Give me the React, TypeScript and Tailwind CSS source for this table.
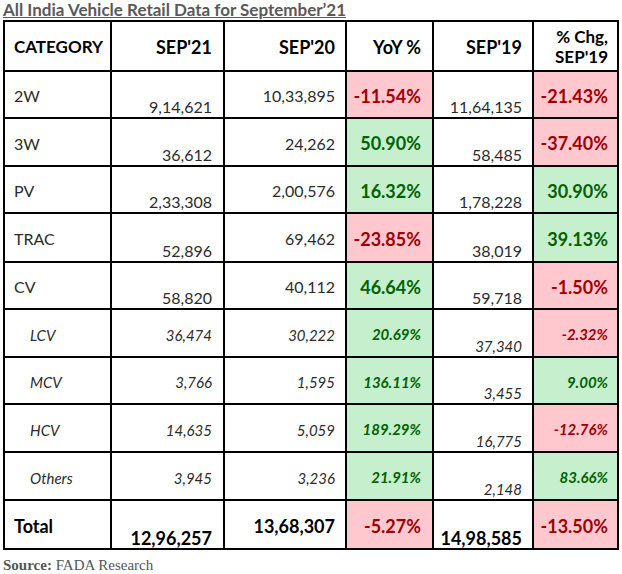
type Row = {
  cat: string;
  s21: string;
  s20: string;
  yoy: string;
  s19: string;
  chg: string;
  sub?: boolean;
};

const rows: Row[] = [
  { cat: "2W", s21: "9,14,621", s20: "10,33,895", yoy: "-11.54%", s19: "11,64,135", chg: "-21.43%" },
  { cat: "3W", s21: "36,612", s20: "24,262", yoy: "50.90%", s19: "58,485", chg: "-37.40%" },
  { cat: "PV", s21: "2,33,308", s20: "2,00,576", yoy: "16.32%", s19: "1,78,228", chg: "30.90%" },
  { cat: "TRAC", s21: "52,896", s20: "69,462", yoy: "-23.85%", s19: "38,019", chg: "39.13%" },
  { cat: "CV", s21: "58,820", s20: "40,112", yoy: "46.64%", s19: "59,718", chg: "-1.50%" },
  { cat: "LCV", s21: "36,474", s20: "30,222", yoy: "20.69%", s19: "37,340", chg: "-2.32%", sub: true },
  { cat: "MCV", s21: "3,766", s20: "1,595", yoy: "136.11%", s19: "3,455", chg: "9.00%", sub: true },
  { cat: "HCV", s21: "14,635", s20: "5,059", yoy: "189.29%", s19: "16,775", chg: "-12.76%", sub: true },
  { cat: "Others", s21: "3,945", s20: "3,236", yoy: "21.91%", s19: "2,148", chg: "83.66%", sub: true },
];

const pctCell = (v: string) =>
  v.startsWith("-") ? "bg-[#ffc7ce] text-[#9c0006]" : "bg-[#c6efce] text-[#006100]";

const Pct = ({ v, sub, pr }: { v: string; sub?: boolean; pr: string }) => (
  <div
    className={`flex items-center justify-end pt-[2px] font-bold ${pr} ${pctCell(v)} ${
      sub ? "italic text-[15px]" : "text-[18px]"
    }`}
  >
    {v}
  </div>
);

export default function App() {
  return (
    <div className="w-[622px] h-[574px] bg-white font-['Lato',sans-serif] text-[#2b2b2b]">
      <div className="h-[20px] pl-[3px] text-[17px] leading-[20px] font-bold text-[#595959] underline underline-offset-1">
        All India Vehicle Retail Data for September’21
      </div>
      <div className="ml-[3px] w-[616px] grid grid-cols-[105px_111px_120px_85px_98px_83px] grid-rows-[48px_45px_46px_45px_47px_45px_46px_45px_46px_46px_47px] gap-[2px] p-[2px] bg-black leading-[18px]">
        {/* header */}
        <div className="bg-white flex items-center pl-[9px] pt-[2px] text-[17px] font-bold text-black">CATEGORY</div>
        <div className="bg-white flex items-center justify-end pr-[11px] pt-[2px] text-[18px] font-bold text-black">SEP'21</div>
        <div className="bg-white flex items-center justify-end pr-[10px] pt-[2px] text-[18px] font-bold text-black">SEP'20</div>
        <div className="bg-white flex items-center justify-end pr-[11px] pt-[2px] text-[18px] font-bold text-black">YoY %</div>
        <div className="bg-white flex items-center justify-end pr-[10px] pt-[2px] text-[18px] font-bold text-black">SEP'19</div>
        <div className="bg-white flex flex-col items-end justify-center pr-[9px] pt-[2px] text-[17px] leading-[20px] font-bold text-black">
          <span>% Chg,</span>
          <span>SEP'19</span>
        </div>

        {rows.map((r) => {
          const txt = r.sub ? "italic text-[15px]" : "text-[16px]";
          return [
            <div key={r.cat + "c"} className={`bg-white flex items-center pt-[3px] ${r.sub ? "pl-[25px]" : "pl-[9px]"} ${txt}`}>
              {r.cat}
            </div>,
            <div
              key={r.cat + "a"}
              className={`bg-white flex justify-end pr-[11px] ${txt} ${
                r.sub ? "items-center pt-[3px]" : "items-end pb-[1px]"
              }`}
            >
              {r.s21}
            </div>,
            <div key={r.cat + "b"} className={`bg-white flex items-center justify-end pr-[10px] pt-[3px] ${txt}`}>
              {r.s20}
            </div>,
            <Pct key={r.cat + "y"} v={r.yoy} sub={r.sub} pr="pr-[11px]" />,
            <div key={r.cat + "d"} className={`bg-white flex items-end justify-end pr-[10px] pb-[1px] ${txt}`}>
              {r.s19}
            </div>,
            <Pct key={r.cat + "g"} v={r.chg} sub={r.sub} pr="pr-[9px]" />,
          ];
        })}

        {/* total */}
        <div className="bg-white flex items-center pl-[9px] pt-[2px] text-[18px] font-bold text-black">Total</div>
        <div className="bg-white flex items-end justify-end pr-[11px] pb-[1px] text-[18px] font-bold text-black">12,96,257</div>
        <div className="bg-white flex items-center justify-end pr-[10px] pt-[2px] text-[18px] font-bold text-black">13,68,307</div>
        <Pct v="-5.27%" pr="pr-[11px]" />
        <div className="bg-white flex items-end justify-end pr-[10px] pb-[1px] text-[18px] font-bold text-black">14,98,585</div>
        <Pct v="-13.50%" pr="pr-[9px]" />
      </div>
      <div className="pl-[3px] pt-[6px] font-['Liberation_Serif',serif] text-[15px] leading-[18px] text-[#555]">
        <span className="font-bold">Source:</span> FADA Research
      </div>
    </div>
  );
}
